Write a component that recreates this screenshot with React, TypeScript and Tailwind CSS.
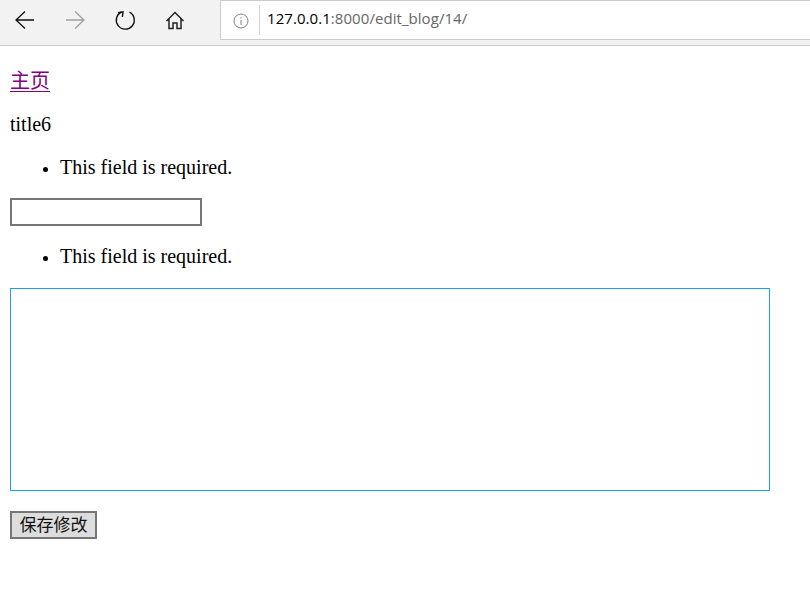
import React from "react";

function Toolbar() {
  return (
    <div className="flex h-[46px] bg-[#f2f2f2] border-b border-[#cccccc]">
      <div className="flex w-[220px] h-[40px] shrink-0 items-center">
        <svg width="220" height="40" viewBox="0 0 220 40" fill="none">
          <path d="M34 20H16M25 11.5L16 20L25 28.5" stroke="#111" strokeWidth="1.3" />
          <path d="M66 20H84M75 11.5L84 20L75 28.5" stroke="#a0a0a0" strokeWidth="1.3" />
          <path d="M121.5 12A9 9 0 1 0 129.5 12.2" stroke="#111" strokeWidth="1.4" />
          <path d="M118 12.8L123 11.8L122.4 17" stroke="#111" strokeWidth="1.4" />
          <path d="M166.5 21L175 12.5L183.5 21M169 19V28.5H173V23H177V28.5H181V19" stroke="#222" strokeWidth="1.5" />
        </svg>
      </div>
      <div className="flex-1 h-[40px] bg-white border border-r-0 border-[#cccccc] flex items-center">
        <div className="w-[38px] flex justify-center pl-[1px]">
          <svg width="16" height="16" viewBox="0 0 16 16" fill="none" className="mt-[1px]">
            <circle cx="8" cy="8" r="7" stroke="#808080" strokeWidth="1" />
            <path d="M8 7V12M8 4.2V5.6" stroke="#808080" strokeWidth="1" />
          </svg>
        </div>
        <div className="w-px h-[30px] bg-[#d0d0d0]" />
        <div className="pl-[7px] pb-[4px] text-[15px] tracking-[0.06px] text-[#666] font-['Open_Sans','Noto_Sans',sans-serif] leading-[24px]">
          <span className="text-black">127.0.0.1</span>:8000/edit_blog/14/
        </div>
      </div>
    </div>
  );
}

export default function App() {
  return (
    <div className="min-h-[600px] bg-white text-black text-[20px] font-['Liberation_Serif','Noto_Sans_CJK_SC',serif]">
      <Toolbar />
      <div className="px-[10px] pt-[24px]">
        <div className="leading-[23px]">
          <a href="#" className="text-[#800080] underline decoration-1 underline-offset-[3px]">主页</a>
        </div>
        <p className="mt-[20px] leading-[23px]">title6</p>
        <ul className="mt-[20px] pl-[50px] list-disc leading-[23px] marker:text-[18px]">
          <li>This field is required.</li>
        </ul>
        <input className="block mt-[19px] w-[192px] h-[28px] border-2 border-[#767676] bg-white" />
        <ul className="mt-[19px] pl-[50px] list-disc leading-[23px] marker:text-[18px]">
          <li>This field is required.</li>
        </ul>
        <textarea className="block mt-[20px] w-[760px] h-[203px] border border-[#1ba1e2] bg-white resize-none" />
        <button className="block mt-[20px] w-[87px] h-[28px] border-2 border-[#767676] bg-[#dddddd] text-[17px] leading-[20px] pt-[2px] text-center text-[#111] font-['Liberation_Sans','Noto_Sans_CJK_SC',sans-serif]">
          保存修改
        </button>
      </div>
    </div>
  );
}
